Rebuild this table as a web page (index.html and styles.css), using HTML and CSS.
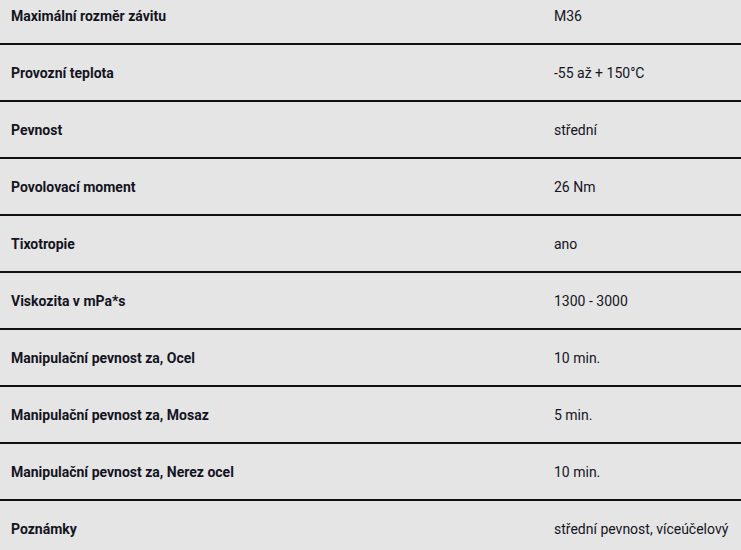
FILE: index.html
```html
<!DOCTYPE html>
<html lang="cs">
<head>
<meta charset="utf-8">
<link rel="stylesheet" href="styles.css">
</head>
<body>
<div class="specs">
  <div class="row"><div class="label">Maximální rozměr závitu</div><div class="value">M36</div></div>
  <div class="row"><div class="label">Provozní teplota</div><div class="value">-55 až + 150°C</div></div>
  <div class="row"><div class="label">Pevnost</div><div class="value">střední</div></div>
  <div class="row"><div class="label">Povolovací moment</div><div class="value">26 Nm</div></div>
  <div class="row"><div class="label">Tixotropie</div><div class="value">ano</div></div>
  <div class="row"><div class="label">Viskozita v mPa*s</div><div class="value">1300 - 3000</div></div>
  <div class="row"><div class="label">Manipulační pevnost za, Ocel</div><div class="value">10 min.</div></div>
  <div class="row"><div class="label">Manipulační pevnost za, Mosaz</div><div class="value">5 min.</div></div>
  <div class="row"><div class="label">Manipulační pevnost za, Nerez ocel</div><div class="value">10 min.</div></div>
  <div class="row last"><div class="label">Poznámky</div><div class="value">střední pevnost, víceúčelový</div></div>
</div>
</body>
</html>
```
FILE: styles.css
```css
html, body {
  margin: 0;
  padding: 0;
  background: #e5e5e5;
}
body {
  font-family: Roboto, "Liberation Sans", sans-serif;
  font-size: 14px;
  color: #14141f;
  overflow: hidden;
}
.specs {
  margin-top: -12px;
}
.row {
  display: grid;
  grid-template-columns: 543px 1fr;
  align-items: center;
  height: 55px;
  border-bottom: 2px solid #111;
}
.row.last {
  border-bottom: 1px solid #ddd;
}
.label {
  padding-left: 11px;
  font-weight: 700;
}
.value {
  padding-left: 11px;
  white-space: nowrap;
}
```
